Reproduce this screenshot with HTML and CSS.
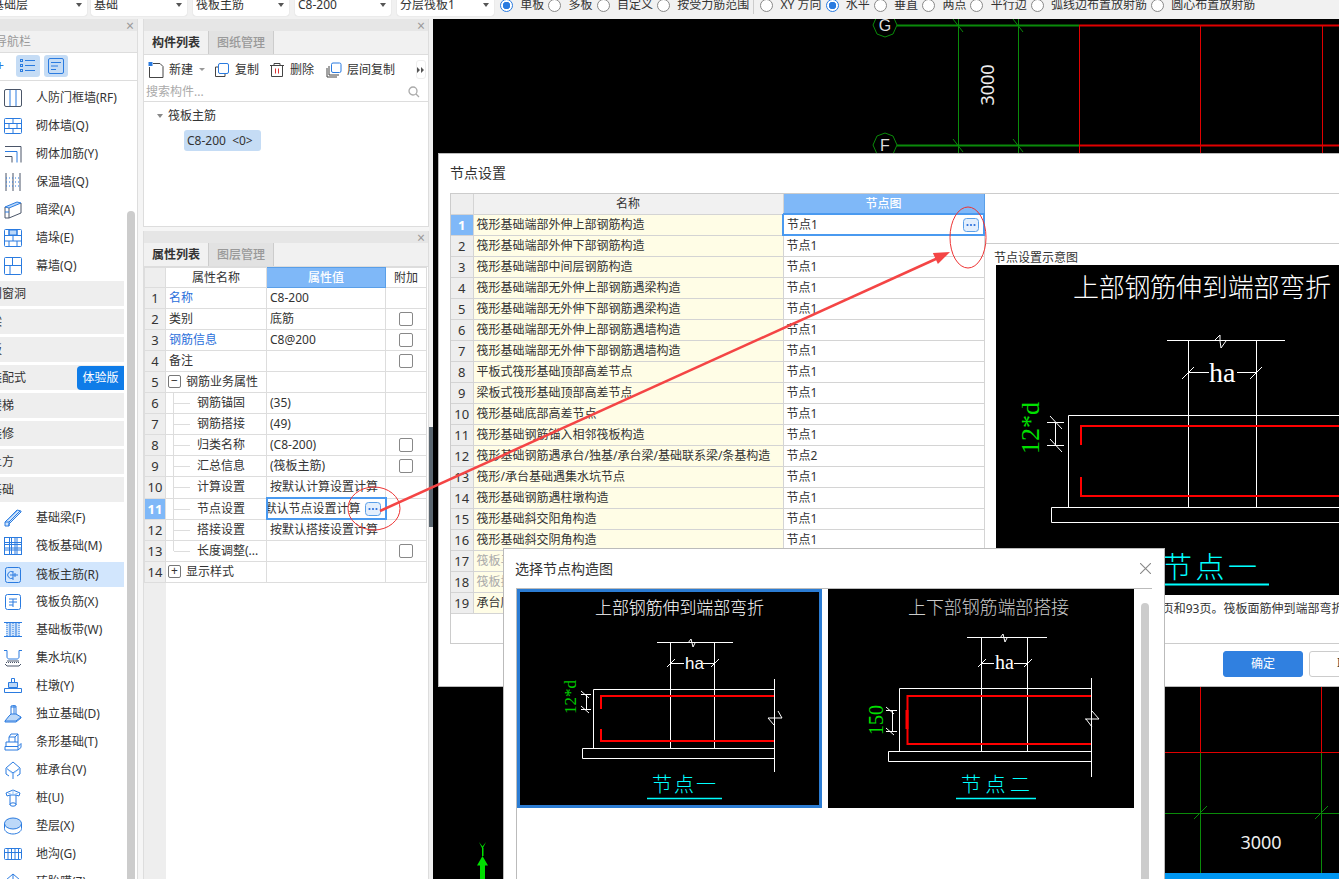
FILE: index.html
```html
<!DOCTYPE html>
<html lang="zh-CN">
<head>
<meta charset="utf-8">
<title>节点设置</title>
<link rel="stylesheet" href="styles.css">
</head>
<body>
<div class="app">
  <div class="topbar">
    <div class="sel sel-first"><span>基础层</span><i class="caret"></i></div>
    <div class="sel"><span>基础</span><i class="caret"></i></div>
    <div class="sel"><span>筏板主筋</span><i class="caret"></i></div>
    <div class="sel"><span>C8-200</span><i class="caret"></i></div>
    <div class="sel sel-last"><span>分层筏板1</span><i class="caret"></i></div>
    <div class="radios">
      <label class="radio on"><i></i>单板</label>
      <label class="radio"><i></i>多板</label>
      <label class="radio"><i></i>自定义</label>
      <label class="radio"><i></i>按受力筋范围</label>
      <span class="vsep"></span>
      <label class="radio"><i></i>XY 方向</label>
      <label class="radio on"><i></i>水平</label>
      <label class="radio"><i></i>垂直</label>
      <label class="radio"><i></i>两点</label>
      <label class="radio"><i></i>平行边</label>
      <label class="radio"><i></i>弧线边布置放射筋</label>
      <label class="radio"><i></i>圆心布置放射筋</label>
    </div>
  </div>

  <div class="main">
    <aside class="nav">
      <div class="strip"><span class="x">×</span></div>
      <div class="nav-title">导航栏</div>
      <div class="nav-tools">
        <span class="plus">+</span>
        <span class="tbtn"><svg viewBox="0 0 16 14" width="16" height="14"><g fill="none" stroke="#2a7be0"><rect x=".5" y=".5" width="2" height="2"/><rect x=".5" y="5.5" width="2" height="2"/><rect x=".5" y="10.5" width="2" height="2"/><path d="M5 1.5h10M5 6.5h10M5 11.5h10"/></g></svg></span>
        <span class="tbtn"><svg viewBox="0 0 16 16" width="16" height="16"><g fill="none" stroke="#2a7be0"><rect x=".5" y=".5" width="15" height="15" rx="1.5"/><path d="M3 4.5h10M3 8h7M3 11.5h5"/></g></svg></span>
      </div>
      <div class="nav-body">
        <div class="nav-list">
          <div class="nav-item"><svg class="ic" viewBox="0 0 18 18"><rect x=".5" y=".5" width="17" height="17" rx="1.5" stroke="#4a5568"/><path d="M6 1v16M12 1v16"/></svg>人防门框墙(RF)</div>
          <div class="nav-item"><svg class="ic" viewBox="0 0 18 18"><rect x=".5" y="1.5" width="17" height="15" rx="1"/><path d="M1 6.5h16M1 11.5h16M9 2v4M5 7v4M13 7v4M9 12v4"/></svg>砌体墙(Q)</div>
          <div class="nav-item"><svg class="ic" viewBox="0 0 18 18"><path d="M1 1.5h16v16" stroke="#4a5568"/><path d="M1 6.5h12v11"/><path d="M1 11.5h7v6" stroke="#4a5568"/></svg>砌体加筋(Y)</div>
          <div class="nav-item"><svg class="ic" viewBox="0 0 18 18"><path d="M2 0v18M9 0v18M16 0v18" stroke="#4a5568"/><path d="M2 5h14M2 9h14M2 13h14" stroke-dasharray="1 2"/></svg>保温墙(Q)</div>
          <div class="nav-item"><svg class="ic" viewBox="0 0 18 18"><path d="M1 6l12-5 4 1-12 5z" fill="#bcd8f8"/><path d="M5 7v10l12-5V2" stroke="#4a5568"/><path d="M1 6v11h4" stroke="#4a5568"/><path d="M1 11h4"/></svg>暗梁(A)</div>
          <div class="nav-item"><svg class="ic" viewBox="0 0 18 18"><rect x=".5" y=".5" width="17" height="17" rx="1"/><rect x="5" y="1" width="8" height="5" fill="#bcd8f8"/><path d="M1 6.5h16M1 12h16M5 1v5M13 1v5M9 6v6M5 12v5M13 12v5"/></svg>墙垛(E)</div>
          <div class="nav-item"><svg class="ic" viewBox="0 0 18 18"><rect x=".5" y=".5" width="17" height="17" rx="1"/><path d="M1 8.5h16M8.5 1v7.5M6 9v8"/></svg>幕墙(Q)</div>
          <div class="groups">
            <div class="group"><span>门窗洞</span></div>
            <div class="group"><span>梁</span></div>
            <div class="group"><span>板</span></div>
            <div class="group"><span>装配式</span><em class="badge">体验版</em></div>
            <div class="group"><span>楼梯</span></div>
            <div class="group"><span>装修</span></div>
            <div class="group"><span>土方</span></div>
            <div class="group"><span>基础</span></div>
          </div>
          <div class="nav-item"><svg class="ic" viewBox="0 0 18 18"><path d="M1 13L13 1l4 1v1L5 15v2H1z" fill="#d0e4fb"/><path d="M1 13h4v4M5 13L16 2"/><path d="M3.500 11L13 2" stroke="#6aa8f0"/></svg>基础梁(F)</div>
          <div class="nav-item"><svg class="ic" viewBox="0 0 18 18"><rect x=".5" y=".5" width="17" height="17"/><path d="M1 5.5h16M1 7.5h16M1 11h16M1 13h16M5.5 1v16M7.5 1v16M11 1v16M13 1v16"/></svg>筏板基础(M)</div>
          <div class="nav-item cur"><svg class="ic" viewBox="0 0 18 18"><rect x="1.5" y="1.5" width="15" height="15" rx="2"/><path d="M9 5v9M9 6a3.500 3.500 0 1 0 0 6M6 9h8M11 7v4"/></svg>筏板主筋(R)</div>
          <div class="nav-item"><svg class="ic" viewBox="0 0 18 18"><rect x="1.500" y="1.500" width="15" height="15" rx="2"/><path d="M5 6h8M5 9h8M5 12h4M9 6v8"/></svg>筏板负筋(X)</div>
          <div class="nav-item"><svg class="ic" viewBox="0 0 18 18"><rect x="2" y="2" width="14" height="13" fill="#d0e4fb" stroke="none"/><path d="M0 1.500h18M0 15.500h18M6 2v13M12 2v13"/><path d="M3 2v13M9 2v13M15 2v13" stroke-dasharray="1 1"/></svg>基础板带(W)</div>
          <div class="nav-item"><svg class="ic" viewBox="0 0 18 18"><path d="M0 1.500h3v6.500c0 1 1 2 2 2h8c1 0 2-1 2-2V1.500h3"/><path d="M3 12h12M1 15l2 2h12l2-2" stroke="#4a5568"/><path d="M2 13.500h14" stroke-dasharray="1 1" stroke="#4a5568"/></svg>集水坑(K)</div>
          <div class="nav-item"><svg class="ic" viewBox="0 0 18 18"><path d="M7.500 1.500h3v4h-3z"/><path d="M4.500 5.500h9v5h-9z" fill="#bcd8f8"/><path d="M.5 11.500h17v4h-17z"/></svg>柱墩(Y)</div>
          <div class="nav-item"><svg class="ic" viewBox="0 0 18 18"><path d="M7 1l3-.5 2 .5v9H7z"/><path d="M7 2h5M10 1v8"/><path d="M5 11l2-2h5l5 3-5 4H1z" fill="#bcd8f8"/><path d="M1 16v1h11l5-4v-1"/></svg>独立基础(D)</div>
          <div class="nav-item"><svg class="ic" viewBox="0 0 18 18"><path d="M5 9V4l2-3h7v8"/><path d="M5 4h6l3-3M11 4v5"/><path d="M2 13V9h12v4"/><path d="M1 13.500h13v3.500H1zM14 13.500l3-3v4l-3 2.500"/></svg>条形基础(T)</div>
          <div class="nav-item"><svg class="ic" viewBox="0 0 18 18"><path d="M9 1l7 6-7 5-7-5z"/><path d="M2 7v6l3 2M16 7v6l-3 2M9 12v6"/><path d="M2 7l7 6 7-6" stroke="#8fbef5"/></svg>桩承台(V)</div>
          <div class="nav-item"><svg class="ic" viewBox="0 0 18 18"><path d="M9 1L2 4l1 3 3-1h6l3 1 1-3z"/><path d="M9 1v5M4 4l5 2 5-2" stroke="#8fbef5"/><path d="M6 6v10M12 6v10"/><ellipse cx="9" cy="15.500" rx="3" ry="1.700"/></svg>桩(U)</div>
          <div class="nav-item"><svg class="ic" viewBox="0 0 18 18"><ellipse cx="9" cy="6.500" rx="8.500" ry="5.500" fill="#bcd8f8"/><path d="M.5 6.500v5c0 3 4 5.500 8.500 5.500s8.500-2.500 8.500-5.500v-5"/></svg>垫层(X)</div>
          <div class="nav-item"><svg class="ic" viewBox="0 0 18 18"><rect x=".5" y="3.500" width="17" height="11" rx="1"/><path d="M1 7.500h16M4 4v10M7.500 4v10M11 4v10M14.500 4v10"/></svg>地沟(G)</div>
          <div class="nav-item"><svg class="ic" viewBox="0 0 18 18"><path d="M9 1l7 6-7 5-7-5zM9 1v11M2 7h14"/></svg>砖胎膜(Z)</div>
        </div>
        <div class="track"><div class="thumb"></div></div>
      </div>
    </aside>

    <div class="mid">
      <section class="panel panel-top">
        <div class="strip"><span class="x">×</span></div>
        <div class="tabs"><span class="tab on">构件列表</span><span class="tab">图纸管理</span></div>
        <div class="tools">
          <span class="tool t-new"><svg class="tic" viewBox="0 0 16 16"><path d="M5 1.500h7l3 3v11H1.500V5" stroke="#444" fill="none"/><rect x=".5" y="0" width="4" height="4" fill="#2a7be0"/></svg>新建<i class="mini-caret"></i></span>
          <span class="tool t-copy"><svg class="tic" viewBox="0 0 16 16"><path d="M4 5H1.500v9.500H11V12" stroke="#444" fill="none"/><rect x="4.500" y="1.500" width="10" height="10" rx="1.500" fill="#fff" stroke="#2a7be0"/></svg>复制</span>
          <span class="tool t-del"><svg class="tic" viewBox="0 0 16 16"><path d="M1 3.500h14M5 3.500V1.500h6v2M2.500 3.500v11h11v-11" stroke="#444" fill="none"/><path d="M6.500 6.500v5M9.500 6.500v5" stroke="#d33" fill="none"/></svg>删除</span>
          <span class="tool t-floor"><svg class="tic" viewBox="0 0 16 16"><path d="M1 6v9h10M3 4v9h10" stroke="#444" fill="none"/><rect x="5.500" y="1" width="9.500" height="9.500" rx="1.500" fill="#fff" stroke="#2a7be0"/></svg>层间复制</span>
          <span class="more"><svg viewBox="0 0 8 6" width="8" height="6"><path d="M0 0l3 3-3 3zM4 0l3 3-3 3z" fill="#555"/></svg></span>
        </div>
        <div class="search"><span>搜索构件...</span><svg viewBox="0 0 12 12" width="12" height="12"><circle cx="5" cy="5" r="4" fill="none" stroke="#aaa" stroke-width="1.300"/><path d="M8 8l3 3" stroke="#aaa" stroke-width="1.300"/></svg></div>
        <div class="tree">
          <div class="tree-root"><i class="tree-arrow"></i>筏板主筋</div>
          <div class="chip">C8-200 &nbsp;&lt;0&gt;</div>
        </div>
      </section>

      <section class="panel panel-props">
        <div class="strip"><span class="x">×</span></div>
        <div class="tabs"><span class="tab on">属性列表</span><span class="tab">图层管理</span></div>
        <table class="grid props">
          <colgroup><col class="c-num"><col class="c-name"><col class="c-val"><col class="c-add"></colgroup>
          <tr><th class="num"></th><th>属性名称</th><th class="hl">属性值</th><th>附加</th></tr>
          <tr><td class="num">1</td><td class="link">名称</td><td>C8-200</td><td></td></tr>
          <tr><td class="num">2</td><td>类别</td><td>底筋</td><td><i class="chk"></i></td></tr>
          <tr><td class="num">3</td><td class="link">钢筋信息</td><td>C8@200</td><td><i class="chk"></i></td></tr>
          <tr><td class="num">4</td><td>备注</td><td></td><td><i class="chk"></i></td></tr>
          <tr><td class="num">5</td><td class="grp"><i class="exp">−</i>钢筋业务属性</td><td></td><td></td></tr>
          <tr><td class="num">6</td><td class="sub">钢筋锚固</td><td>(35)</td><td></td></tr>
          <tr><td class="num">7</td><td class="sub">钢筋搭接</td><td>(49)</td><td></td></tr>
          <tr><td class="num">8</td><td class="sub">归类名称</td><td>(C8-200)</td><td><i class="chk"></i></td></tr>
          <tr><td class="num">9</td><td class="sub">汇总信息</td><td>(筏板主筋)</td><td><i class="chk"></i></td></tr>
          <tr><td class="num">10</td><td class="sub">计算设置</td><td>按默认计算设置计算</td><td></td></tr>
          <tr><td class="num cur-num">11</td><td class="sub">节点设置</td><td class="edit"><div class="edit-in"><span>按默认节点设置计算</span><svg class="dots" viewBox="0 0 16 14" width="16" height="14"><rect x=".5" y=".5" width="15" height="13" rx="3" fill="#e3effd" stroke="#5a9fe8"/><circle cx="4.500" cy="7" r="1.100" fill="#2a6fdb"/><circle cx="8" cy="7" r="1.100" fill="#2a6fdb"/><circle cx="11.500" cy="7" r="1.100" fill="#2a6fdb"/></svg></div></td><td></td></tr>
          <tr><td class="num">12</td><td class="sub">搭接设置</td><td>按默认搭接设置计算</td><td></td></tr>
          <tr><td class="num">13</td><td class="sub last">长度调整(...</td><td></td><td><i class="chk"></i></td></tr>
          <tr><td class="num">14</td><td class="grp"><i class="exp">+</i>显示样式</td><td></td><td></td></tr>
        </table>
        <div class="props-rest"><div class="rest-num"></div></div>
      </section>
    </div>

    <div class="splitter"><span class="handle"></span></div>

    <div class="canvas">
      <svg class="cad" viewBox="433 19 906 860" width="906" height="860">
        <g class="g-green">
          <path d="M897 25.500H1079M897 145.500H1079" stroke-width="2"/>
          <path d="M958.500 19V160M1018.500 19V160M953 19l10 13M1013 19l10 13M1013 139l10 13M953 139l10 13"/>
          <path d="M885 13l8 3 4 9-4 9-8 3-8-3-4-9 4-9zM885 133l8 3 4 9-4 9-8 3-8-3-4-9 4-9z"/>
          <path d="M1200.500 752V873M1321.500 752V873M1165 813.500H1339M1194 819l13-13M1315 819l13-13"/>
        </g>
        <g class="g-red">
          <path d="M1079 25.500H1339M1079 145.500H1339" stroke-width="2"/>
          <path d="M1079.500 26V160M1200.500 26V160M1322.500 26V160M1200.500 687V752M1321.500 687V752M1165 752.500H1339"/>
        </g>
        <text class="t-axis" x="885" y="31" text-anchor="middle">G</text>
        <text class="t-axis" x="885" y="151" text-anchor="middle">F</text>
        <text class="t-dim" transform="translate(994 85) rotate(-90)" text-anchor="middle">3000</text>
        <text class="t-dim" x="1261" y="849" text-anchor="middle">3000</text>
        <rect x="1165" y="873" width="174" height="6" fill="#0096f0"/>
        <g fill="#00e000" stroke="none">
          <path d="M480 865h5v14h-5zM482.500 856l5.500 9.500h-11zM482 848h1.500v8H482z"/>
          <path d="M479 842l3 6h1l3-6-3.500 4.500z"/>
        </g>
      </svg>
    </div>
  </div>

  <div class="dlg dlg-node">
    <div class="dlg-in">
      <div class="dlg-title">节点设置</div>
      <div class="dlg-box">
        <table class="grid nodes">
          <colgroup><col class="n-num"><col class="n-name"><col class="n-val"></colgroup>
          <tr><th class="num"></th><th>名称</th><th class="hl">节点图</th></tr>
          <tr><td class="num cur-num">1</td><td class="nm">筏形基础端部外伸上部钢筋构造</td><td class="edit"><div class="edit-in start"><span>节点1</span><svg class="dots" viewBox="0 0 16 14" width="16" height="14"><rect x=".5" y=".5" width="15" height="13" rx="3" fill="#e3effd" stroke="#5a9fe8"/><circle cx="4.500" cy="7" r="1.100" fill="#2a6fdb"/><circle cx="8" cy="7" r="1.100" fill="#2a6fdb"/><circle cx="11.500" cy="7" r="1.100" fill="#2a6fdb"/></svg></div></td></tr>
          <tr><td class="num">2</td><td class="nm">筏形基础端部外伸下部钢筋构造</td><td>节点1</td></tr>
          <tr><td class="num">3</td><td class="nm">筏形基础端部中间层钢筋构造</td><td>节点1</td></tr>
          <tr><td class="num">4</td><td class="nm">筏形基础端部无外伸上部钢筋遇梁构造</td><td>节点1</td></tr>
          <tr><td class="num">5</td><td class="nm">筏形基础端部无外伸下部钢筋遇梁构造</td><td>节点1</td></tr>
          <tr><td class="num">6</td><td class="nm">筏形基础端部无外伸上部钢筋遇墙构造</td><td>节点1</td></tr>
          <tr><td class="num">7</td><td class="nm">筏形基础端部无外伸下部钢筋遇墙构造</td><td>节点1</td></tr>
          <tr><td class="num">8</td><td class="nm">平板式筏形基础顶部高差节点</td><td>节点1</td></tr>
          <tr><td class="num">9</td><td class="nm">梁板式筏形基础顶部高差节点</td><td>节点1</td></tr>
          <tr><td class="num">10</td><td class="nm">筏形基础底部高差节点</td><td>节点1</td></tr>
          <tr><td class="num">11</td><td class="nm">筏形基础钢筋锚入相邻筏板构造</td><td>节点1</td></tr>
          <tr><td class="num">12</td><td class="nm">筏形基础钢筋遇承台/独基/承台梁/基础联系梁/条基构造</td><td>节点2</td></tr>
          <tr><td class="num">13</td><td class="nm">筏形/承台基础遇集水坑节点</td><td>节点1</td></tr>
          <tr><td class="num">14</td><td class="nm">筏形基础钢筋遇柱墩构造</td><td>节点1</td></tr>
          <tr><td class="num">15</td><td class="nm">筏形基础斜交阳角构造</td><td>节点1</td></tr>
          <tr><td class="num">16</td><td class="nm">筏形基础斜交阴角构造</td><td>节点1</td></tr>
          <tr><td class="num">17</td><td class="nm dim">筏板马凳筋构造</td><td>节点1</td></tr>
          <tr><td class="num">18</td><td class="nm dim">筏板拉筋构造</td><td>节点1</td></tr>
          <tr><td class="num">19</td><td class="nm">承台底部钢筋构造</td><td>节点1</td></tr>
        </table>
        <div class="preview">
          <div class="preview-top"></div>
          <div class="preview-cap">节点设置示意图</div>
          <svg class="bigfig" viewBox="996 266 400 330" width="400" height="330">
            <text class="f-title" x="1073" y="298" textLength="258">上部钢筋伸到端部弯折</text>
            <g class="w">
              <path d="M1167 341.500H1285M1188.500 341V508M1256.500 341V508"/>
              <path d="M1214 342l6-6v6l1 7 5-7" />
              <path d="M1188 373.500H1209M1237 373.500H1257M1182 380l12-12M1250 380l12-12"/>
              <path d="M1068.500 508V416.500H1396M1051.500 508.500H1396V523.500H1051.500z"/>
              <path d="M1055.500 423V446M1047 423.500H1064M1047 446.500H1064M1050 417l12 13M1050 440l12 13"/>
            </g>
            <text class="f-ha" x="1209" y="383">ha</text>
            <path class="r" d="M1081 446V427H1396M1081 478V497H1396"/>
            <text class="f-12d" transform="translate(1039 455) rotate(-90)">12*d</text>
            <text class="f-node" x="1163" y="579">节点一</text>
            <path d="M1130 585.500H1269" stroke="#0ff" stroke-width="2"/>
          </svg>
          <div class="preview-desc">图集第92页和93页。筏板面筋伸到端部弯折，筏板底筋伸到端部弯折。</div>
        </div>
      </div>
      <div class="dlg-foot"><span class="btn primary">确定</span><span class="btn">取消</span></div>
    </div>
  </div>

  <svg class="marks" viewBox="0 0 1339 879" width="1339" height="879">
    <ellipse cx="374" cy="508.500" rx="26" ry="21.500" fill="none" stroke="#e33" stroke-width="1"/>
    <ellipse cx="968" cy="237.500" rx="18" ry="30.500" fill="none" stroke="#e33" stroke-width="1"/>
    <path d="M380 511L938 258" stroke="#f44545" stroke-width="2.500"/>
    <path d="M950 252L937.900 264.100L932.900 253.100z" fill="#f44545"/>
  </svg>

  <div class="dlg dlg-pick">
    <div class="pick-head"><span class="pick-title">选择节点构造图</span><svg class="pick-x" viewBox="0 0 12 12" width="11" height="11"><path d="M0 0L12 12M12 0L0 12" stroke="#888" stroke-width="1.200"/></svg></div>
    <div class="pick-body">
      <div class="card sel-card">
        <svg viewBox="517 589 305 219" width="305" height="219">
          <rect x="517" y="589" width="305" height="219" fill="#000"/>
          <rect x="518.500" y="590.500" width="302" height="216" fill="none" stroke="#2b7cd3" stroke-width="3"/>
          <text class="c-title" x="595" y="614" textLength="169">上部钢筋伸到端部弯折</text>
          <g class="w">
            <path d="M657 642.500H733M670.500 642V748M714.500 642V748"/>
            <path d="M688 643l3-4 1 4 1 4 2-4"/>
            <path d="M670 663.500H684M703 663.500H714M667 667l8-8M711 667l8-8"/>
            <path d="M593.500 748V689.500H774.500M582.500 748.500H774.500V758.500H582.500zM774.500 679V772"/>
            <path d="M768 718h14l-4-7M774 725l-6-7"/>
            <path d="M586.500 694V710M581 694.500H591M581 709.500H591M581 691l8 7M581 706l8 7"/>
          </g>
          <text class="c-ha-s" x="685" y="669">ha</text>
          <path class="r" d="M601 709V696H774M601 729V741H774"/>
          <text class="c-12d" transform="translate(576 714) rotate(-90)">12*d</text>
          <text class="c-node" x="652" y="792" textLength="64">节点一</text>
          <path d="M647 798.500H722" stroke="#0ff" stroke-width="1.500"/>
        </svg>
      </div>
      <div class="card">
        <svg viewBox="828 589 306 219" width="306" height="219">
          <rect x="828" y="589" width="306" height="219" fill="#000"/>
          <text class="c-title2" x="908" y="614" textLength="161">上下部钢筋端部搭接</text>
          <g class="w">
            <path d="M967 637.500H1047M981.500 637V751M1027.500 637V751"/>
            <path d="M1000 638l3-4 1 4 1 4 2-4"/>
            <path d="M981 663.500H994M1014 663.500H1027M978 667l8-8M1024 667l8-8"/>
            <path d="M899.500 751V688.500H1091.500M888.500 751.500H1091.500V761.500H888.500zM1091.500 678V777"/>
            <path d="M1085 719h14l-7-8M1092 727l-6-8"/>
            <path d="M892.500 710V732M886 710.500H897M886 731.500H897M886 707l8 7M886 728l8 7"/>
          </g>
          <text class="f-ha c-ha" x="995" y="669">ha</text>
          <path class="r" d="M1091 696H907.500V744H1091"/>
          <path d="M907 710V729" stroke="#f00" stroke-width="3"/>
          <text class="c-150" transform="translate(883 735) rotate(-90)">150</text>
          <text class="c-node" x="961" y="792" textLength="69">节点二</text>
          <path d="M956 798.500H1036" stroke="#0ff" stroke-width="1.500"/>
        </svg>
      </div>
      <div class="pick-scroll"></div>
    </div>
  </div>
</div>
</body>
</html>
```

FILE: styles.css
```css
* { box-sizing: border-box; }
html, body { margin: 0; padding: 0; }
body {
  width: 1339px; height: 879px; overflow: hidden; background: #f5f5f5;
  font: 12px/16px "Noto Sans", "Noto Sans CJK SC", sans-serif; color: #333;
}
i, em { font-style: normal; }
.app { position: relative; width: 1339px; height: 879px; overflow: hidden; display: flex; flex-direction: column; }

/* top toolbar */
.topbar { flex: 0 0 19px; height: 19px; display: flex; align-items: flex-end; gap: 6px; padding-bottom: 3px; background: #f1f1f1; }
.sel { flex: 0 0 96px; height: 22px; background: #fff; border-radius: 0 0 3px 3px; display: flex; align-items: center; justify-content: space-between; padding: 0 5px 0 3px; white-space: nowrap; box-shadow: 0 0 1px #bbb; }
.sel-first { flex-basis: 95px; margin: 0 -2px 0 -8px; padding-left: 0; }
.sel-last { flex-basis: 97px; }
.caret { border: 3px solid transparent; border-top: 4px solid #555; border-bottom: 0; }
.radios { display: flex; align-items: center; gap: 4px; height: 22px; white-space: nowrap; }
.radio { display: flex; align-items: center; gap: 7.3px; }
.radio i { width: 13px; height: 13px; border: 1px solid #888; border-radius: 50%; background: #fff; flex: none; }
.radio.on i { border-color: #2a7be0; background: radial-gradient(circle, #2a7be0 0 3.5px, #fff 4px); }
.vsep { width: 1px; height: 18px; background: #ccc; margin: 0 2px 0 0; }

.main { flex: 1; display: flex; min-height: 0; }
.strip { height: 12px; background: #e6e6e6; position: relative; display: flex; justify-content: flex-end; align-items: center; padding-right: 3px; flex: none; }
.x { color: #999; font-size: 14px; line-height: 11px; }

/* left nav */
.nav { flex: 0 0 138px; display: flex; flex-direction: column; background: #fff; border-right: 1px solid #ddd; overflow: hidden; }
.nav-title { flex: 0 0 22px; line-height: 22px; background: #f1f1f1; color: #999; text-indent: -5px; border-bottom: 1px solid #ddd; white-space: nowrap; overflow: hidden; }
.nav-tools { flex: 0 0 28px; display: flex; align-items: center; gap: 4px; border-bottom: 1px solid #ddd; padding-bottom: 2px; }
.plus { color: #2a7be0; width: 12px; text-indent: -4px; font-size: 14px; overflow: hidden; }
.tbtn { width: 24px; height: 22px; background: #c5dcf5; border-radius: 3px; display: flex; align-items: center; justify-content: center; }
.nav-body { flex: 1; display: flex; min-height: 0; overflow: hidden; }
.nav-list { flex: 0 0 124px; padding-top: 3px; }
.nav-item { height: 28px; display: flex; align-items: center; padding-left: 4px; white-space: nowrap; }
.nav-item.cur { background: #d2e6fd; background-clip: padding-box; border-top: 2px solid transparent; border-bottom: 1px solid transparent; }
.ic { width: 18px; height: 18px; flex: none; margin-right: 14px; fill: none; stroke: #2a7be0; stroke-width: 1; }
.groups { display: flex; flex-direction: column; gap: 3px; margin: 1px 0 2px; }
.group { height: 25px; background: #eee; display: flex; align-items: center; justify-content: space-between; overflow: hidden; white-space: nowrap; }
.group span { margin-left: -10px; }
.badge { width: 47px; height: 24px; line-height: 24px; text-align: center; background: #0f7ce8; color: #fff; border-radius: 4px 0 0 4px; }
.track { flex: 0 0 8px; margin-left: 3px; padding-top: 130px; }
.thumb { height: 800px; background: #ccc; border-radius: 4px 4px 0 0; }

/* middle */
.mid { flex: 0 0 286px; margin-left: 5px; display: flex; flex-direction: column; gap: 4px; overflow: hidden; }
.panel { background: #fff; border: 1px solid #ddd; border-top: 0; display: flex; flex-direction: column; }
.panel-top { flex: 0 0 208px; }
.panel-props { flex: 1; min-height: 0; border-bottom: 0; }
.tabs { flex: 0 0 23px; display: flex; background: #f1f1f1; border-bottom: 1px solid #ddd; }
.tab { width: 65px; text-align: center; line-height: 23px; color: #999; background: #e2e2e2; border-right: 1px solid #ccc; font-weight: 500; }
.tab.on { color: #333; background: #f1f1f1; font-weight: 700; }
.tools { flex: 0 0 28px; display: flex; align-items: center; padding: 1px 0 0 4px; white-space: nowrap; }
.tool { display: flex; align-items: center; }
.tic { width: 16px; height: 16px; margin-right: 5px; flex: none; }
.t-new { width: 66px; }
.mini-caret { border: 3px solid transparent; border-top: 3px solid #999; border-bottom: 0; margin-left: 6px; }
.t-copy { width: 55px; }
.t-del { width: 57px; }
.more { margin-left: 21px; width: 10px; height: 19px; border: 1px solid #eee; border-radius: 3px; display: flex; align-items: center; justify-content: center; overflow: hidden; }
.search { flex: 0 0 19px; display: flex; align-items: center; justify-content: space-between; padding: 0 8px 0 2px; color: #aaa; border-bottom: 1px solid #ddd; }
.tree { flex: 1; padding-top: 6px; }
.tree-root { display: flex; align-items: center; padding-left: 13px; height: 16px; }
.tree-arrow { border: 3px solid transparent; border-top: 4px solid #888; border-bottom: 0; margin-right: 5px; }
.chip { width: 77px; height: 21px; margin: 6px 0 0 40px; line-height: 21px; padding-left: 3px; background: #c5dcf5; border-radius: 3px; white-space: nowrap; }

/* tables */
.grid { border-collapse: collapse; table-layout: fixed; flex: none; }
.grid th, .grid td { height: 21px; padding: 0 3px; border: 1px solid #ddd; line-height: 20px; overflow: hidden; white-space: nowrap; font-weight: 400; text-align: left; position: relative; }
.grid th { text-align: center; height: 20px; line-height: 18px; }
.grid th.hl { background: #7fb8f8; color: #fff; border-color: #5a9fe8; font-weight: 500; }
.grid .num { background: #eee; text-align: center; padding: 0; font-size: 13px; }
.grid .cur-num { background: #7fb8f8; color: #fff; font-weight: 700; }
.props { width: 282px; }
.c-num { width: 21px; } .c-name { width: 101px; } .c-val { width: 119px; } .c-add { width: 41px; }
.link { color: #2a6fdb; }
.chk { display: block; width: 14px; height: 14px; margin: 0 auto; border: 1px solid #888; border-radius: 2px; background: #fff; }
.exp { float: left; width: 13px; height: 13px; margin: 3px 5px 0 0; border: 1px solid #777; border-radius: 2px; line-height: 10px; text-align: center; font-size: 12px; }
.grid td.grp { padding-left: 2px; }
.grid td.sub { padding-left: 31px; }
.sub::before { content: ""; position: absolute; left: 7px; top: 0; bottom: 0; width: 1px; background: #ddd; }
.sub.last::before { bottom: 10px; }
.sub::after { content: ""; position: absolute; left: 8px; top: 10px; width: 16px; height: 1px; background: #ddd; }
.grid td.edit { border: 2px solid #4a9af0; padding: 0; }
.edit-in { height: 17px; display: flex; justify-content: flex-end; align-items: center; overflow: hidden; gap: 4px; padding: 0 4px 0 0; }
.edit-in span { flex: none; line-height: 17px; }
.edit-in.start { justify-content: space-between; padding-left: 3px; }
.dots { flex: none; display: block; }
.props-rest { flex: 1; }
.rest-num { width: 22px; height: 100%; background: #eee; }

/* CAD */
.splitter { flex: 0 0 4px; background: #f1f1f1; padding-top: 408px; }
.handle { display: block; height: 100px; background: #5a6670; }
.canvas { flex: 1; background: #000; overflow: hidden; }
.cad { display: block; }
.g-green { fill: none; stroke: #0a8a0a; stroke-width: 1; }
.g-red { fill: none; stroke: #e00000; stroke-width: 1; }
.t-axis { fill: #ddd; font: 16px "Liberation Sans", sans-serif; }
.t-dim { fill: #eee; font: 18px "Noto Sans", sans-serif; }

/* dialogs: free windows above the canvas */
.dlg { position: absolute; background: #fff; border: 1px solid #bbb; overflow: hidden; }
.dlg-node { left: 438px; top: 153px; width: 902px; height: 534px; }
.dlg-in { width: 1100px; }
.dlg-title { height: 39px; padding: 11px 0 0 11px; font-size: 14px; line-height: 16px; }
.dlg-box { margin-left: 11px; width: 1088px; height: 451px; border: 1px solid #ccc; display: flex; }
.nodes { width: 533px; align-self: flex-start; }
.n-num { width: 22px; } .n-name { width: 310px; } .n-val { width: 201px; }
.nodes th, .nodes td { border-color: #d4d4d4; }
.nodes th { background: #f1f1f1; padding-top: 1px; }
.nodes tr:first-child th { border-top: 0; }
.nodes .num { border-left: 0; }
.nodes .nm { background: #fffde6; padding-left: 3px; }
.nodes .dim { color: #aaa; }
.preview { flex: 1; min-width: 0; }
.preview-top { height: 50px; border-bottom: 1px solid #ccc; }
.preview-cap { height: 21px; padding: 6px 0 0 9px; line-height: 16px; white-space: nowrap; }
.bigfig { display: block; margin-left: 11px; background: #000; }
.preview-desc { padding: 6px 0 0 127px; white-space: nowrap; line-height: 16px; }
.dlg-foot { height: 43px; display: flex; align-items: center; gap: 6px; padding: 0 0 4px 784px; }
.btn { flex: none; width: 80px; height: 26px; line-height: 24px; text-align: center; border: 1px solid #ccc; border-radius: 3px; background: #fff; color: #333; }
.btn.primary { background: #3080e0; border-color: #3080e0; color: #fff; }

.f-title { fill: #fff; font: 300 26px "Noto Sans CJK SC", sans-serif; }
.w { fill: none; stroke: #fff; stroke-width: 1; }
.r { fill: none; stroke: #f00; stroke-width: 2; }
.f-ha { fill: #fff; font: 28px "Liberation Serif", serif; }
.f-12d { fill: #00e000; font: 26px "Liberation Serif", serif; }
.f-node { fill: #0ff; font: 300 29px "Noto Sans CJK SC", sans-serif; letter-spacing: 3.5px; }

.marks { position: absolute; left: 0; top: 0; pointer-events: none; }

.dlg-pick { left: 503px; top: 548px; width: 662px; height: 340px; }
.pick-head { height: 39px; display: flex; align-items: center; justify-content: space-between; padding: 0 13px 0 11px; }
.pick-title { font-size: 14px; }
.pick-body { margin-left: 12px; width: 636px; height: 300px; border-left: 1px solid #bbb; border-top: 1px solid #bbb; display: flex; align-items: flex-start; }
.card { flex: none; height: 219px; margin-right: 6px; }
.card svg { display: block; }
.sel-card { flex-basis: 305px; }
.c-title { fill: #fff; font: 300 17px "Noto Sans CJK SC", sans-serif; }
.c-title2 { fill: #ccc; font: 300 18px "Noto Sans CJK SC", sans-serif; }
.c-ha-s { fill: #fff; font: 17px "Liberation Sans", sans-serif; }
.c-ha { font-size: 20px; }
.c-12d { fill: #00c800; font: 17px "Liberation Serif", serif; }
.c-150 { fill: #00e000; font: 20px "Liberation Serif", serif; }
.c-node { fill: #0ff; font: 300 20px "Noto Sans CJK SC", sans-serif; }
.pick-scroll { flex: none; width: 8px; height: 290px; margin: 14px 0 0 1px; background: #ccc; border-radius: 4px 4px 0 0; }
```
